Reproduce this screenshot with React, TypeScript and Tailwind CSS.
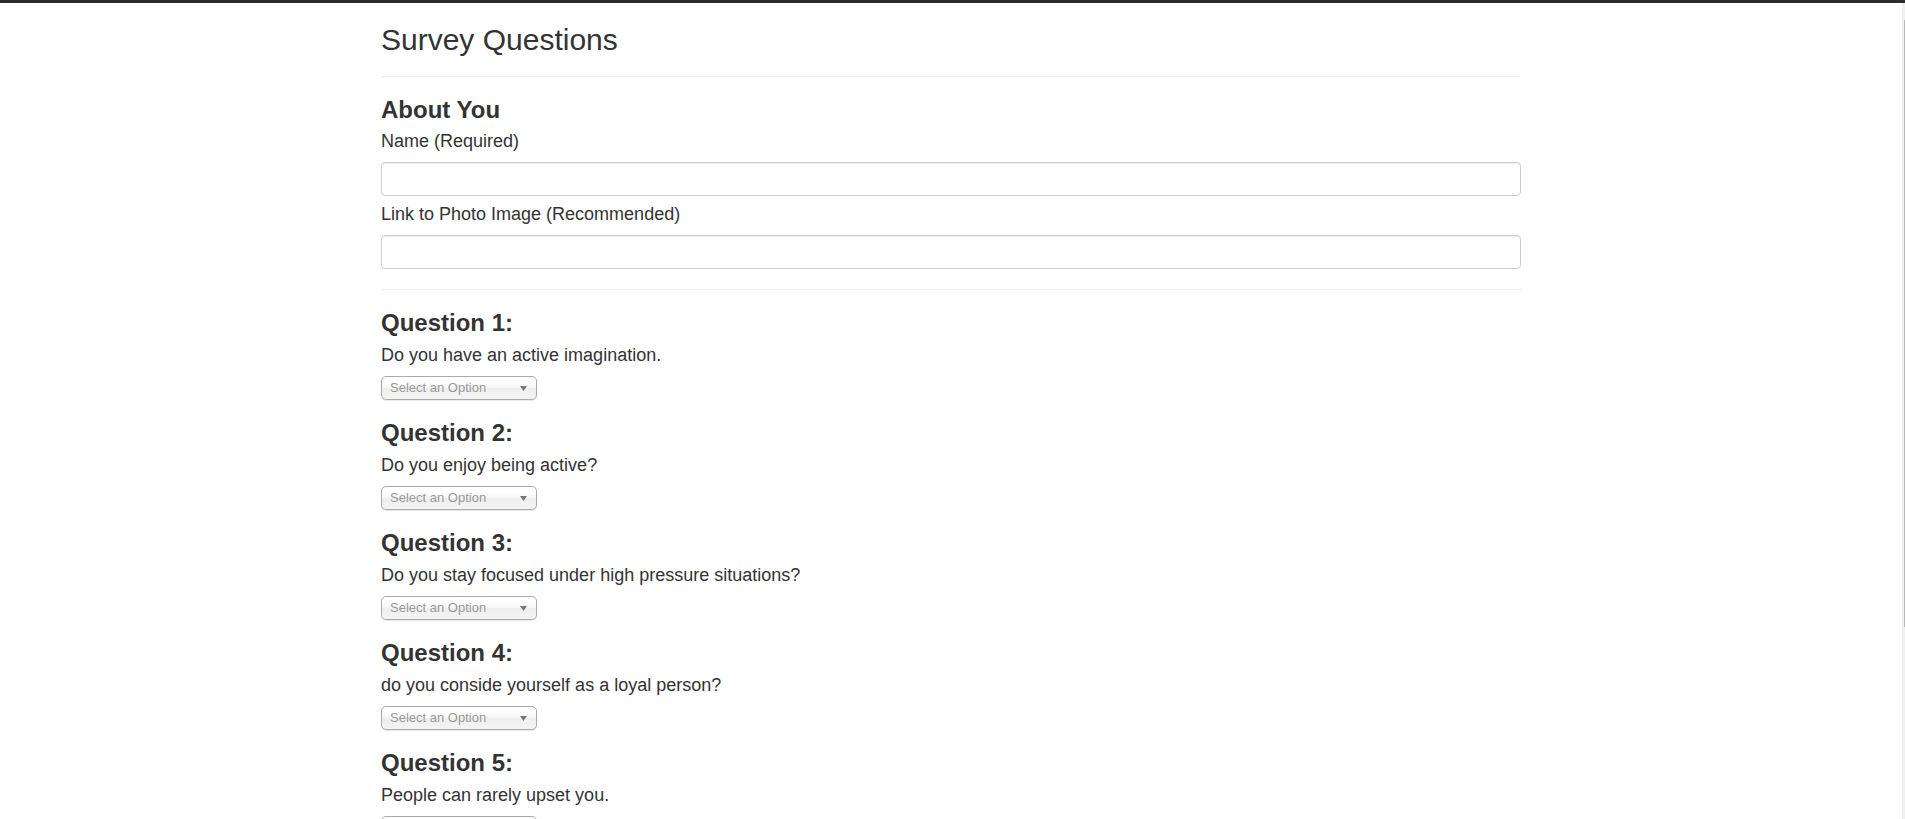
const questions = [
  "Do you have an active imagination.",
  "Do you enjoy being active?",
  "Do you stay focused under high pressure situations?",
  "do you conside yourself as a loyal person?",
  "People can rarely upset you.",
]

function SelectBox() {
  return (
    <div className="mt-[8px] flex h-[24px] w-[156px] items-center justify-between rounded-[5px] border border-[#aaa] bg-[linear-gradient(#fff_20%,#f6f6f6_50%,#eee_52%,#f4f4f4_100%)] pl-[8px] pr-[8px] shadow-[0_1px_1px_rgba(0,0,0,0.1)]">
      <span className="text-[13px] leading-[22px] text-[#999]">Select an Option</span>
      <svg width="7" height="5" viewBox="0 0 7 5" className="mr-[1px]">
        <polygon points="0,0 7,0 3.5,5" fill="#777" />
      </svg>
    </div>
  )
}

function TextField({ label }: { label: string }) {
  return (
    <>
      <label className="mt-[6px] block text-[18px] leading-[25px]">{label}</label>
      <input
        type="text"
        className="mt-[8px] block h-[34px] w-full rounded-[4px] border border-[#ccc] bg-white px-3 shadow-[inset_0_1px_1px_rgba(0,0,0,0.075)] outline-none"
      />
    </>
  )
}

export default function App() {
  return (
    <div className="flex h-[819px] flex-col overflow-hidden bg-white font-['Liberation_Sans',Arial,sans-serif] text-[#333]">
      <div className="h-[3px] shrink-0 bg-[#2b2b2b]" />
      <div className="flex min-h-0 flex-1">
        <main className="min-w-0 flex-1">
          <div className="mx-auto w-[1170px] px-[15px]">
            <div className="border-b border-[#eee] pb-[20px]">
              <h2 className="mt-[20px] text-[30px] font-normal leading-[33px]">Survey Questions</h2>
            </div>

            <h3 className="mt-[20px] text-[24px] font-bold leading-[26px]">About You</h3>
            <TextField label="Name (Required)" />
            <TextField label="Link to Photo Image (Recommended)" />

            <hr className="mt-[20px] border-0 border-t border-[#eee]" />

            {questions.map((q, i) => (
              <div key={i} className="mt-[20px]">
                <h3 className="text-[24px] font-bold leading-[26px]">Question {i + 1}:</h3>
                <p className="mt-[7px] text-[18px] leading-[25px]">{q}</p>
                <SelectBox />
              </div>
            ))}
          </div>
        </main>
        <div className="w-[3px] shrink-0 bg-[#f0f0f0]">
          <div className="ml-[2px] mt-[17px] h-[607px] w-[1px] bg-[#b8b8b8]" />
        </div>
      </div>
    </div>
  )
}
